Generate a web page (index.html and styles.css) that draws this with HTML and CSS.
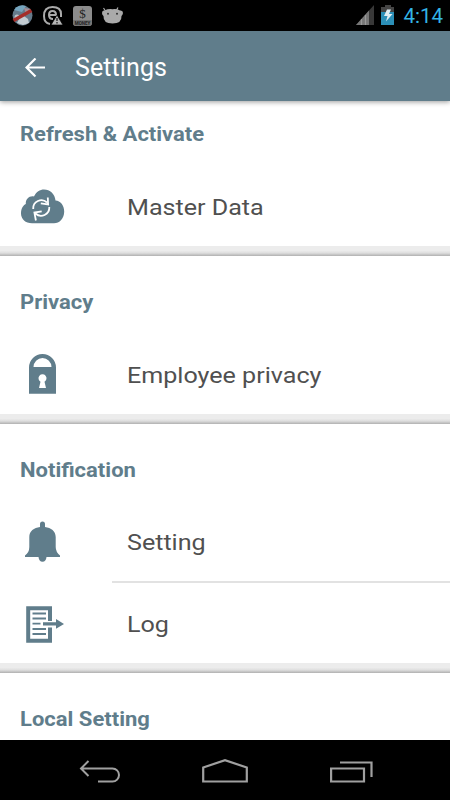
FILE: index.html
```
<!DOCTYPE html>
<html lang="en">
<head>
<meta charset="utf-8">
<title>Settings</title>
<link rel="stylesheet" href="styles.css">
</head>
<body>
<div class="screen">
  <div class="status">
    <svg class="notices" width="130" height="31" viewBox="0 0 130 31">
      <circle cx="22.500" cy="15.500" r="10" fill="#657b8b"/>
      <path d="M14 10a10 10 0 0 1 12-4l-4 6z" fill="#76a5be"/>
      <path d="M24 8l2 6 5-5z" fill="#a58f98"/>
      <path d="M17 23l3-6 4-1 4 3 1 4-6 2z" fill="#c3ccd2"/>
      <circle cx="17" cy="17" r="2.500" fill="#bac3c9"/>
      <path d="M13.500 20.500L31.500 10.500" stroke="#a42f2b" stroke-width="3.600"/>
      <path d="M50 24q-6-1-6-8 0-9 8.500-9t8.500 7v3" fill="none" stroke="#aaa" stroke-width="2"/>
      <path d="M49 15h7q0-4-3.500-4T49 15q0 4 4 4" fill="none" stroke="#aaa" stroke-width="2"/>
      <path d="M57 15l6 10H51z" fill="#b5b5b5" stroke="#000" stroke-width=".7"/>
      <path d="M57 18v3m0 1v1.500" stroke="#222" stroke-width="1.300"/>
      <rect x="73" y="6" width="19" height="20" rx="3" fill="#8c8c8c"/>
      <text x="82.500" y="17.500" class="dollar">$</text>
      <path d="M73 20h19v2q0 4-3 4H76q-3 0-3-4z" fill="#747474"/>
      <text x="82.500" y="24.800" class="money">MONEY</text>
      <path d="M105.500 11L103.500 8M116.500 10l1.500-2.500" stroke="#aaa" stroke-width="1.200" fill="none"/>
      <path d="M102 13q0-3 2.500-2.500Q108 8.700 112.500 9.200 117 8.700 120 10.500q3-.5 3 2.500-.3 2-1.500 3 .5 7.500-9 7.500t-9-7.500Q102 15 102 13z" fill="#aaa"/>
      <circle cx="108" cy="13.800" r="1" fill="#333"/><circle cx="117" cy="13.800" r="1" fill="#333"/>
    </svg>
    <div class="status-right">
      <svg width="40" height="31" viewBox="0 0 40 31">
        <path d="M0 25L18 5v20z" fill="#383838"/>
        <path d="M0 25L13 10.500V25z" fill="#777"/>
        <path d="M5.500 19v6M9.500 15v10" stroke="#999" stroke-width="1.200"/>
        <path d="M25 7h4V5h6v2h3v18H25z" fill="#444"/>
        <path d="M25 12h13v13H25z" fill="#2b8fb7"/>
        <path d="M31 9.500h4l-2 4.500h3.500L30 21.500l1.500-5.500H28z" fill="#e0eef3"/>
      </svg>
      <span class="clock">4:14</span>
    </div>
  </div>
  <header class="bar">
    <svg width="20" height="20" viewBox="0 0 20 20"><path d="M20 9.500H1.800M10.500 .5L1.500 9.500l9 9" fill="none" stroke="#fff" stroke-width="2.200"/></svg>
    <h1>Settings</h1>
  </header>
  <main class="list">
    <section class="first">
      <h2>Refresh &amp; Activate</h2>
      <div class="row">
        <svg class="icon" width="50" height="50" viewBox="0 0 50 50">
          <path d="M12 42.300C5.500 42.300 1 38 1 32.500c0-5 2.300-8.500 4.800-9.500C5.500 18 9.500 14.500 14 15.500 16 11 20 8.500 24 8.500c6 0 11 4.500 11.500 11 5 .3 8.700 5 8.700 11 0 7-4.700 11.800-10.200 11.800z" fill="#607d8b"/>
          <path d="M13.200 28A8.200 8.200 0 0 1 27 21.500M29.300 26A8.200 8.200 0 0 1 15.500 32.500M27.800 16.500l.3 7-7.300-1.200M15.900 39.500l-1.500-8 7.300-1.200" fill="none" stroke="#fff" stroke-width="1.800"/>
        </svg>
        <span class="label">Master Data</span>
      </div>
    </section>
    <section>
      <h2>Privacy</h2>
      <div class="row">
        <svg class="icon" width="50" height="50" viewBox="0 0 50 50">
          <path fill-rule="evenodd" fill="#607d8b" d="M9 44.800V18.500a13.500 13.500 0 0 1 27 0V44.800zM13.500 18h18a9 9 0 0 0-18 0zM19 39h7l-1.500-6.200a4 4 0 1 0-4 0z"/>
        </svg>
        <span class="label">Employee privacy</span>
      </div>
    </section>
    <section class="notification">
      <h2>Notification</h2>
      <div class="row divided">
        <svg class="icon" width="50" height="50" viewBox="0 0 50 50">
          <path fill="#607d8b" d="M20 10V7q0-2.500 2.500-2.500T25 7v3c6 .8 10.700 4 10.700 10v10q0 5 4.300 8.500V40H26.500q-.5 4.800-4 4.800t-4-4.800H5v-1.500q4.300-3 4.300-8.500V20c0-6 4.700-9.200 10.700-10z"/>
        </svg>
        <span class="label">Setting</span>
      </div>
      <div class="row">
        <svg class="icon" width="50" height="50" viewBox="0 0 50 50">
          <path d="M30 22V9.200H8.200v32.500H30V28.500" fill="none" stroke="#607d8b" stroke-width="4"/>
          <path d="M12.500 14.500H26M12.500 19.500H26M12.500 24.700h8M12.500 30H26M12.500 35H26" stroke="#607d8b" stroke-width="1.800"/>
          <path d="M23 23.300h13V20l8 4.900-8 4.900v-3.300H23z" fill="#607d8b"/>
        </svg>
        <span class="label">Log</span>
      </div>
    </section>
    <section class="last">
      <h2>Local Setting</h2>
    </section>
  </main>
  <nav class="nav">
    <svg width="44" height="26" viewBox="0 0 44 26"><path d="M11.500 2L4 9.500l7.500 7.500M4.500 9.500h31a6.500 6.500 0 0 1 0 13H21" fill="none" stroke="#a0a0a0" stroke-width="2"/></svg>
    <svg width="48" height="26" viewBox="0 0 48 26"><path d="M2.200 22.500V8.500L24 1.200 45.800 8.500v14z" fill="none" stroke="#a0a0a0" stroke-width="2.200"/></svg>
    <svg width="44" height="26" viewBox="0 0 44 26"><path d="M2.100 9.500H35v13H2.100zM11 3.500h31.500V18" fill="none" stroke="#a0a0a0" stroke-width="2.200"/></svg>
  </nav>
</div>
</body>
</html>
```
FILE: styles.css
```
* { box-sizing: border-box; }
body { margin: 0; font-family: Roboto, sans-serif; background: #000; }
svg { display: block; flex: none; }
h1, h2 { margin: 0; }
.screen { width: 450px; height: 800px; display: flex; flex-direction: column; overflow: hidden; }
.status { height: 31px; flex: none; display: flex; justify-content: space-between; background: #000; }
.status-right { display: flex; align-items: center; gap: 7px; padding-right: 7px; }
.clock { color: #33b5e5; font-size: 20.500px; line-height: 31px; padding-top: 2px; }
.dollar { font: 13px "Liberation Serif", serif; fill: #222; text-anchor: middle; }
.money { font: bold 4.500px Roboto, sans-serif; fill: #222; text-anchor: middle; }
.bar { height: 70px; flex: none; display: flex; align-items: center; padding: 3px 0 0 25px; gap: 30px; background: #607d8b; box-shadow: 0 1px 5px rgba(0,0,0,.4); position: relative; z-index: 1; }
h1 { color: #fff; font-size: 25px; font-weight: 400; line-height: 30px; letter-spacing: .1px; }
.list { flex: 1; min-height: 0; overflow: hidden; background: #fff; }
section::after { content: ""; display: block; height: 10px; background: linear-gradient(#ececec 0, #ececec 45%, #dedede 70%, #b0b0b0); }
h2 { height: 78px; padding: 31px 0 0 20px; color: #607d8b; font-size: 20px; font-weight: 700; line-height: 30px; transform: scaleX(1.1); transform-origin: 20px 0; }
.first h2 { height: 65px; padding-top: 18px; }
.row { height: 80px; display: flex; align-items: center; padding-left: 20px; gap: 57px; }
.divided { height: 81px; padding-bottom: 2px; background: linear-gradient(#e2e2e2, #e2e2e2) right bottom / 338px 2px no-repeat; }
.label { color: #505050; font-size: 22.500px; line-height: 32px; padding-top: 1px; white-space: nowrap; transform: scaleX(1.115); transform-origin: 0 0; }
.notification .row:last-child .icon { margin-top: 2px; }
.last::after { display: none; }
.nav { height: 60px; flex: none; display: flex; align-items: center; justify-content: center; gap: 80px; padding-top: 4px; background: #000; }
```
